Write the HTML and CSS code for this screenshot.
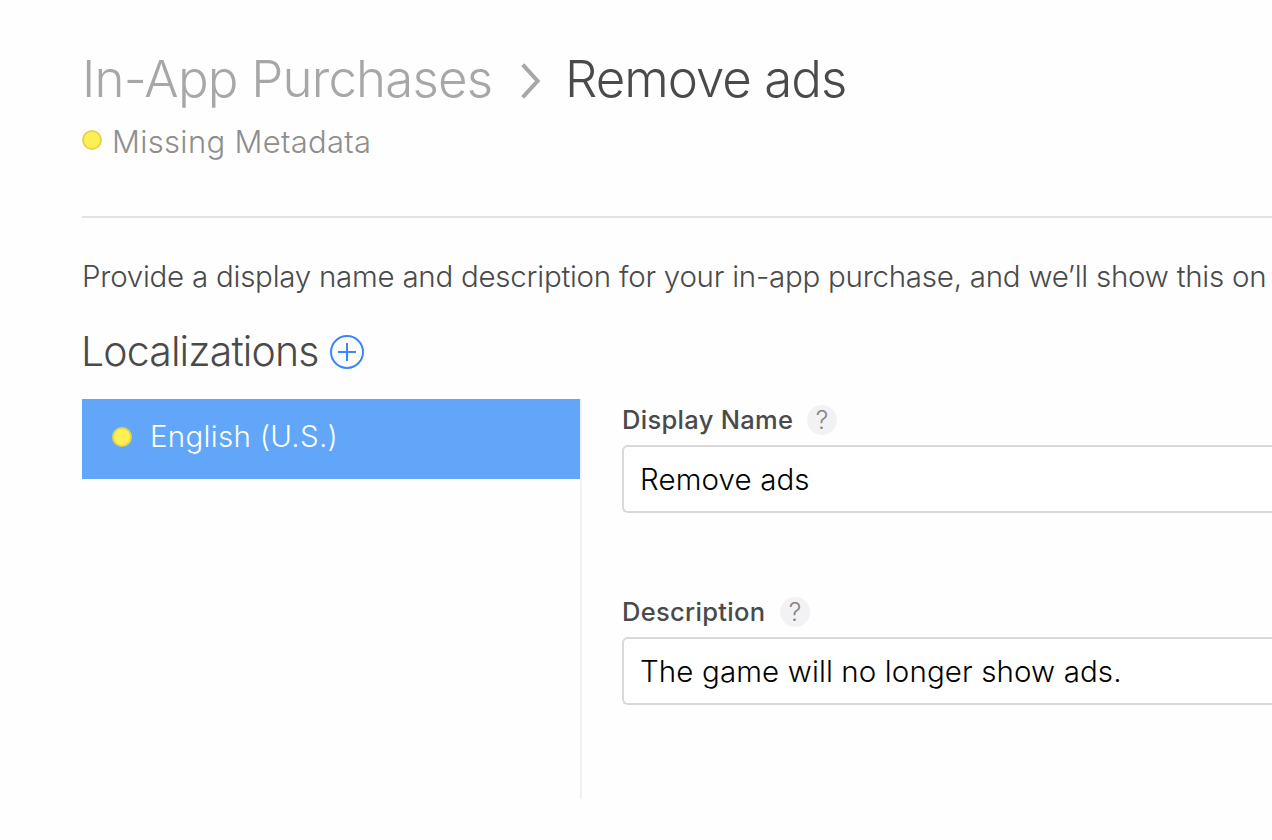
FILE: index.html
```html
<!DOCTYPE html>
<html lang="en">
<head>
<meta charset="utf-8">
<title>In-App Purchases</title>
<link rel="stylesheet" href="styles.css">
</head>
<body>
<main class="page">
  <header class="header">
    <h1 class="crumbs">
      <a class="crumb-parent">In-App Purchases</a>
      <svg class="chevron" width="20" height="36" viewBox="0 0 20 36" fill="none" stroke="#a6a8a8" stroke-width="4"><path d="M1.7 1.6 16.6 18 1.7 34.4"/></svg>
      <span class="crumb-current">Remove ads</span>
    </h1>
    <div class="status"><span class="dot"></span><span class="status-text">Missing Metadata</span></div>
  </header>
  <p class="intro">Provide a display name and description for your in-app purchase, and we’ll show this on</p>
  <h2 class="section-title">
    <span class="section-text">Localizations</span>
    <svg width="34" height="34" viewBox="0 0 34 34" fill="none" stroke="#3a87fb" stroke-width="2"><circle cx="17" cy="17" r="16"/><path d="M17 8v18M8 17h18"/></svg>
  </h2>
  <div class="columns">
    <nav class="languages">
      <a class="language"><span class="dot"></span><span class="language-text">English (U.S.)</span></a>
    </nav>
    <form class="fields">
      <div class="field">
        <div class="label"><span class="name-label">Display Name</span><span class="help">?</span></div>
        <div class="input"><span class="name-value">Remove ads</span></div>
      </div>
      <div class="field">
        <div class="label"><span class="desc-label">Description</span><span class="help">?</span></div>
        <div class="input"><span class="desc-value">The game will no longer show ads.</span></div>
      </div>
    </form>
  </div>
</main>
</body>
</html>
```
FILE: styles.css
```css
* { box-sizing: border-box; }
body {
  margin: 0;
  background: #fefefe;
  color: #4a4a4a;
  font-family: Inter, "Liberation Sans", sans-serif;
  font-weight: 300;
  overflow: hidden;
}
.page { height: 840px; padding: 49px 0 0 82px; overflow: hidden; white-space: nowrap; }
.header { height: 169px; border-bottom: 2px solid #e3e3e3; }
.crumbs { display: flex; align-items: center; margin: 0; height: 60px; font-size: 51px; line-height: 60px; font-weight: 300; }
.crumb-parent { width: 439px; color: #a6a8a8; letter-spacing: -0.8px; }
.chevron { flex: none; margin-top: 3px; }
.crumb-current { margin-left: 24px; letter-spacing: -1px; }
.status { display: flex; align-items: center; gap: 10px; height: 40px; margin-top: 13px; font-size: 31px; line-height: 40px; color: #8e8e8e; letter-spacing: 0.3px; }
.dot { flex: none; width: 20px; height: 20px; border: 2px solid #e3d64b; border-radius: 50%; background: #fff056; }
.status .dot { margin-bottom: 4px; }
.intro { margin: 38px 0 0; font-size: 29.5px; line-height: 40px; letter-spacing: -0.25px; }
.section-title { display: flex; align-items: center; margin: 30px 0 0; height: 50px; font-size: 41px; line-height: 50px; font-weight: 300; }
.section-text { width: 248px; margin-left: -1px; margin-right: 1px; letter-spacing: -0.85px; }
.section-title svg { margin-top: 2px; }
.columns { display: flex; margin-top: 23px; height: 400px; }
.languages { width: 500px; border-right: 2px solid #f0f0f1; }
.language { display: flex; align-items: center; gap: 18px; height: 80px; padding: 0 30px 4px; background: #61a6f8; color: #fff; font-size: 29.5px; letter-spacing: 0.3px; }
.language-text { margin-top: -2px; }
.fields { display: flex; flex-direction: column; gap: 84px; flex: 1; padding: 6px 0 0 40px; }
.label { display: flex; align-items: center; height: 30px; font-size: 25.5px; font-weight: 500; line-height: 30px; letter-spacing: 0.3px; }
.name-label { width: 185px; }
.desc-label { width: 158px; }
.help { width: 30px; height: 30px; border-radius: 50%; background: #f2f2f4; color: #858585; font-size: 25px; font-weight: 300; text-align: center; letter-spacing: 0; }
.input { height: 68px; margin-top: 10px; padding-left: 16px; border: 2px solid #d8d8d8; border-right: 0; border-radius: 6px 0 0 6px; background: #fff; color: #000; font-size: 29.5px; line-height: 64px; letter-spacing: 0.12px; }
```
